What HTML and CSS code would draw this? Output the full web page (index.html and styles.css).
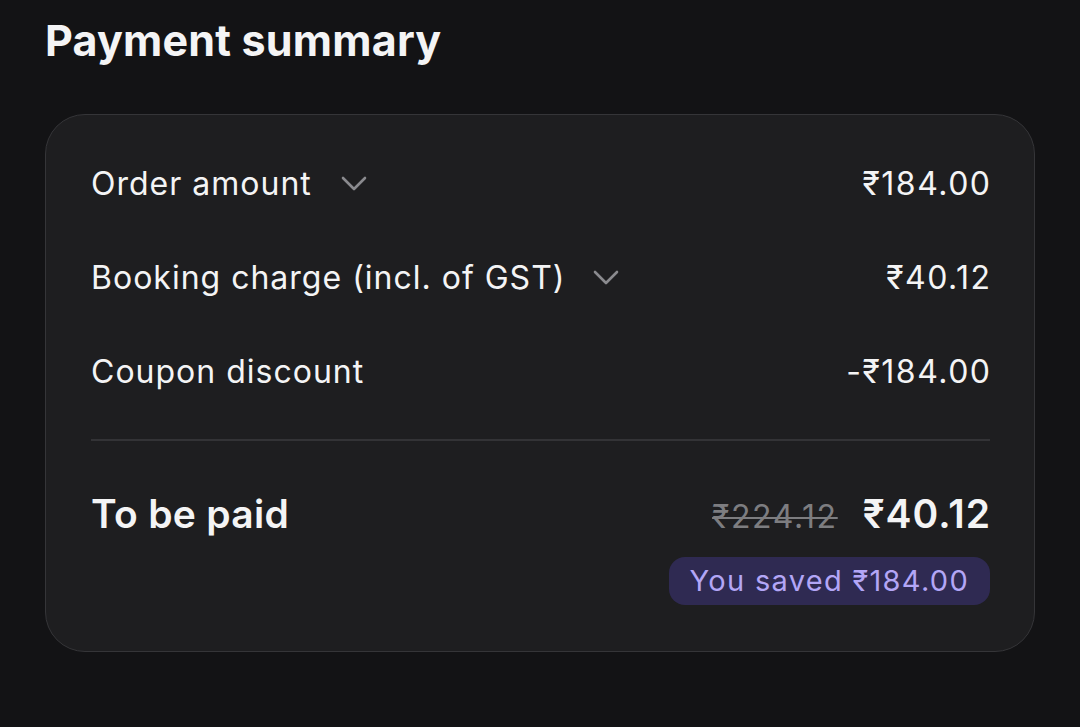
FILE: index.html
```html
<!DOCTYPE html>
<html lang="en">
<head>
<meta charset="utf-8">
<title>Payment summary</title>
<link rel="stylesheet" href="styles.css">
</head>
<body>
<main class="page">
  <h1 class="title">Payment summary</h1>
  <section class="card">
    <div class="row">
      <div class="label">Order amount
        <svg class="chev" viewBox="0 0 26 16" width="26" height="16"><path d="M2 2 L13 13 L24 2" fill="none" stroke="currentColor" stroke-width="2.6" stroke-linecap="round" stroke-linejoin="round"/></svg>
      </div>
      <div class="amount">₹184.00</div>
    </div>
    <div class="row">
      <div class="label">Booking charge (incl. of GST)
        <svg class="chev" viewBox="0 0 26 16" width="26" height="16"><path d="M2 2 L13 13 L24 2" fill="none" stroke="currentColor" stroke-width="2.6" stroke-linecap="round" stroke-linejoin="round"/></svg>
      </div>
      <div class="amount">₹40.12</div>
    </div>
    <div class="row">
      <div class="label">Coupon discount</div>
      <div class="amount">-₹184.00</div>
    </div>
    <hr class="divider">
    <div class="total">
      <div class="total-label">To be paid</div>
      <div class="total-right">
        <div class="prices">
          <span class="old">₹224.12</span>
          <span class="new">₹40.12</span>
        </div>
        <div class="badge">You saved ₹184.00</div>
      </div>
    </div>
  </section>
</main>
</body>
</html>
```

FILE: styles.css
```css
html, body {
  margin: 0;
  padding: 0;
  background: #131315;
}
body {
  font-family: Inter, "Noto Sans", sans-serif;
  color: #f4f4f5;
}
.page {
  padding: 13px 45px 0 45px;
}
.title {
  margin: 0;
  font-size: 43px;
  font-weight: 700;
  line-height: 54px;
  letter-spacing: 0.2px;
}
.card {
  margin-top: 47px;
  width: 990px;
  box-sizing: border-box;
  background: #1e1e20;
  border: 1.5px solid #353538;
  border-radius: 40px;
  padding: 48px 44px 46px 45px;
}
.row {
  display: flex;
  justify-content: space-between;
  align-items: center;
  height: 40px;
  margin-bottom: 54px;
  font-size: 32px;
  letter-spacing: 1px;
}
.row:nth-child(3) {
  margin-bottom: 48px;
}
.amount {
  letter-spacing: 1.5px;
  margin-right: -1.5px;
}
.label {
  display: flex;
  align-items: center;
}
.chev {
  color: #8a8a8e;
  margin-left: 29px;
  margin-top: 2px;
}
.row:nth-child(2) .chev {
  margin-left: 28px;
}
.divider {
  border: 0;
  height: 2px;
  background: #333336;
  margin: 0 0 50px 0;
}
.total {
  display: flex;
  justify-content: space-between;
  align-items: flex-start;
}
.total-label {
  font-size: 39px;
  font-weight: 600;
  line-height: 46px;
  letter-spacing: 0.3px;
}
.total-right {
  display: flex;
  flex-direction: column;
  align-items: flex-end;
}
.prices {
  display: flex;
  align-items: baseline;
  gap: 25px;
  line-height: 46px;
}
.old {
  font-size: 32px;
  color: #7d7d80;
  text-decoration: line-through;
  text-decoration-thickness: 2px;
  letter-spacing: 1.6px;
}
.new {
  font-size: 39px;
  font-weight: 600;
  letter-spacing: 1px;
  margin-right: -1px;
}
.badge {
  margin-top: 17px;
  background: #2f2a52;
  color: #b3a6f6;
  font-size: 29px;
  line-height: 48px;
  padding: 0 21px;
  border-radius: 16px;
  letter-spacing: 1.3px;
}
```
